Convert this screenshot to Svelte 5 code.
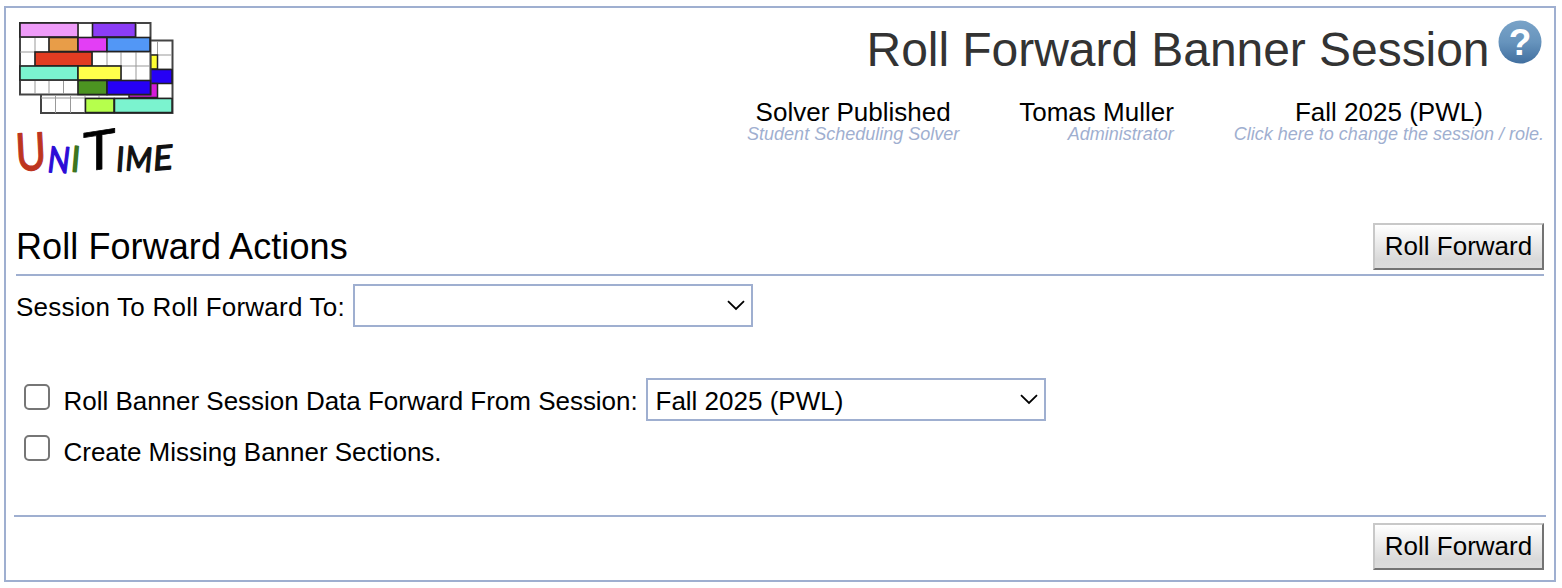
<script>
  let target = $state('');
  let source = $state('Fall 2025 (PWL)');
  let rollData = $state(false);
  let createSections = $state(false);

  const info = [
    { title: 'Solver Published', note: 'Student Scheduling Solver', kind: 'solver' },
    { title: 'Tomas Muller', note: 'Administrator', kind: 'user' },
    { title: 'Fall 2025 (PWL)', note: 'Click here to change the session / role.', kind: 'session' }
  ];

  // Timetable blocks of the logo: x, y, width, height, fill
  const back = [
    [150.5, 55, 7, 14, '#ffff33'],
    [150.5, 69.5, 21.5, 14, '#2600f5'],
    [129, 83.5, 28.5, 14, '#d51bd8'],
    [85.5, 98.5, 28.5, 14, '#b6ff4c'],
    [114.5, 98.5, 57.5, 14, '#7bf3cf']
  ];
  const front = [
    [20, 23, 58, 14, '#ee9bf8'],
    [92.5, 23, 43, 14, '#8b3df6'],
    [49, 37.5, 29, 14, '#e89d48'],
    [78, 37.5, 29, 14, '#e33ef5'],
    [107, 37.5, 43, 14, '#5297f6'],
    [35, 52, 57, 14, '#e23c22'],
    [20, 66, 58, 14, '#7bf3cf'],
    [78, 66, 43, 14, '#ffff4b'],
    [78, 80.5, 29, 14, '#4c9421'],
    [107, 80.5, 43.5, 14, '#2600f5']
  ];
  // Wordmark letters: glyph, x, baseline, size, x scale, colour, stroke, rotation, skew
  const letters = [
    ['U', 16.5, 171, 52, 0.8, '#bd351f', 1.2, -3, 0],
    ['N', 46.5, 172, 36, 0.8, '#2c0bd6', 1.4, 3, -4],
    ['I', 70.5, 171, 35, 0.85, '#3d751f', 1.8, 5, 0],
    ['T', 83, 172, 54, 1.02, '#000', 0.8, 0, 0, -9],
    ['I', 115.5, 171, 34, 0.85, '#151515', 1.6, 4, 0],
    ['M', 124.5, 170, 34, 0.86, '#111', 1.4, 5, 0],
    ['E', 152.5, 170.5, 34, 0.98, '#111', 1.4, 0, -4, -5]
  ];
</script>

{#snippet chevron()}
  <svg class="chevron" width="18" height="11" viewBox="0 0 18 11" aria-hidden="true">
    <path d="M1 1.2 L9 9 L17 1.2" fill="none" stroke="#000" stroke-width="1.8" />
  </svg>
{/snippet}

<main class="page">
  <header>
    <svg class="logo" width="160" height="180" viewBox="16 18 160 180" role="img" aria-label="UniTime">
      <rect x="41" y="40.5" width="131.5" height="72.5" fill="#fff" stroke="#444" stroke-width="2" />
      <path d="M157.5 41V98M55.5 96V113M70.5 96V113M85 96V113M99 96V99M150 55H172M150 69H172M41 98H172" stroke="#999" stroke-width="1" />
      {#each back as [x, y, w, h, fill]}
        <rect {x} {y} width={w} height={h} {fill} stroke="#222" stroke-width="1.5" />
      {/each}
      <rect x="20" y="23" width="130.5" height="71.5" fill="#fff" stroke="#444" stroke-width="2" />
      <path d="M35 37V94M49 37V94M63.5 80V94M78 23V94M92.5 23V94M107 52V80M121 52V80M136 23V80M20 37.5H150M20 52H150M20 66H150M20 80.5H150" stroke="#999" stroke-width="1" />
      {#each front as [x, y, w, h, fill]}
        <rect {x} {y} width={w} height={h} {fill} stroke="#222" stroke-width="1.6" />
      {/each}
      <g class="wordmark">
        {#each letters as [letter, x, y, size, stretch, color, weight, turn, skewX, skewY = 0]}
          <text
            font-size={size}
            fill={color}
            stroke={color}
            stroke-width={weight}
            transform={`translate(${x} ${y}) rotate(${turn}) skewX(${skewX}) skewY(${skewY}) scale(${stretch} 1)`}>{letter}</text>
        {/each}
      </g>
    </svg>
    <div class="heading">
      <div class="title">
        <h1>Roll Forward Banner Session</h1>
        <svg class="help" width="44" height="44" viewBox="0 0 44 44" role="img" aria-label="Help">
          <defs>
            <linearGradient id="help-fill" x1="0" y1="0" x2="0" y2="1">
              <stop offset="0" stop-color="#79a3c8" />
              <stop offset="0.5" stop-color="#6794bd" />
              <stop offset="1" stop-color="#416f9f" />
            </linearGradient>
          </defs>
          <circle cx="22" cy="22" r="21.5" fill="url(#help-fill)" />
          <text x="22" y="35" text-anchor="middle">?</text>
        </svg>
      </div>
      <div class="info">
        {#each info as item}
          <div class="item {item.kind}">
            <span>{item.title}</span>
            <em>{item.note}</em>
          </div>
        {/each}
      </div>
    </div>
  </header>

  <section class="section-title">
    <h2>Roll Forward Actions</h2>
    <button type="button">Roll Forward</button>
  </section>

  <div class="target row">
    <label for="target">Session To Roll Forward To:</label>
    <div class="select">
      <select id="target" bind:value={target}><option value=""></option></select>
      {@render chevron()}
    </div>
  </div>

  <div class="data row">
    <input id="roll" type="checkbox" bind:checked={rollData} />
    <label for="roll">Roll Banner Session Data Forward From Session:</label>
    <div class="select">
      <select bind:value={source} aria-label="Source session"><option>Fall 2025 (PWL)</option></select>
      {@render chevron()}
    </div>
  </div>
  <div class="create row">
    <input id="create" type="checkbox" bind:checked={createSections} />
    <label for="create">Create Missing Banner Sections.</label>
  </div>

  <footer>
    <button type="button">Roll Forward</button>
  </footer>
</main>

<style>
  :global(body) {
    background: #fff;
  }
  :global(#app) {
    display: flow-root;
  }
  .page {
    box-sizing: border-box;
    width: 1552px;
    height: 576px;
    margin: 6px 0 0 4px;
    border: 2px solid #9fafd0;
    font: 26px/30px "Liberation Sans", Arial, sans-serif;
    color: #000;
    display: flex;
    flex-direction: column;
  }
  header {
    display: flex;
    justify-content: space-between;
    height: 212px;
    padding: 10px 10px 0;
    box-sizing: border-box;
    flex: none;
  }
  .logo {
    display: block;
    flex: none;
    overflow: visible;
  }
  .wordmark {
    font-family: Lato, sans-serif;
    stroke-linejoin: round;
  }
  .heading {
    display: flex;
    flex-direction: column;
    align-items: flex-end;
  }
  .title {
    display: flex;
    gap: 8.5px;
    padding: 2px 2px 0 0;
  }
  h1 {
    margin: 0;
    padding-top: 2px;
    font-size: 48px;
    line-height: 56px;
    font-weight: 400;
    color: #333;
    letter-spacing: -0.05px;
    white-space: nowrap;
  }
  .help {
    overflow: visible;
  }
  .help text {
    font: 700 37px "Liberation Sans", Arial, sans-serif;
    fill: #fff;
  }
  .info {
    display: flex;
    gap: 60px;
    margin-top: 19px;
    white-space: nowrap;
  }
  .item {
    display: flex;
    flex-direction: column;
    align-items: center;
  }
  .item.user {
    align-items: flex-end;
  }
  .item em {
    font-size: 18px;
    line-height: 20px;
    margin-top: -3px;
    color: #9fafd0;
  }
  .section-title {
    display: flex;
    justify-content: space-between;
    align-items: flex-start;
    flex: none;
    box-sizing: border-box;
    height: 56px;
    margin: 0 10px;
    padding-top: 3px;
    border-bottom: 2px solid #9fafd0;
  }
  h2 {
    margin: 3px 0 0;
    font-size: 36px;
    line-height: 42px;
    font-weight: 400;
    letter-spacing: 0.08px;
  }
  button {
    box-sizing: border-box;
    width: 171px;
    height: 47px;
    padding: 0 0 2px;
    border: 2px solid;
    border-color: #c8c8c8 #737373 #737373 #c8c8c8;
    background: linear-gradient(#fff, #d9d9d9 80%, #dcdcdc);
    font: inherit;
    color: #000;
  }
  .row {
    display: flex;
    flex: none;
    align-items: flex-start;
    white-space: nowrap;
  }
  .row label {
    margin-top: 8px;
  }
  .target {
    height: 102px;
    padding: 8px 0 0 10px;
    box-sizing: border-box;
  }
  .target label {
    width: 337px;
    letter-spacing: 0.23px;
  }
  .data {
    height: 51px;
    padding-left: 18px;
  }
  .data label {
    width: 582.5px;
    letter-spacing: -0.02px;
  }
  .create {
    height: 78px;
    padding-left: 18px;
  }
  .create label {
    letter-spacing: -0.02px;
  }
  input {
    appearance: none;
    box-sizing: border-box;
    width: 26px;
    height: 26px;
    margin: 6px 13.5px 0 0;
    border: 2px solid #767676;
    border-radius: 5px;
    background: #fff;
  }
  .select {
    position: relative;
    width: 400px;
    height: 43px;
  }
  select {
    appearance: none;
    box-sizing: border-box;
    width: 400px;
    height: 43px;
    padding: 2px 40px 0 7.5px;
    border: 2px solid #9fafd0;
    border-radius: 0;
    background: #fff;
    font: inherit;
    color: #000;
    display: block;
  }
  .chevron {
    position: absolute;
    right: 8px;
    top: 16px;
    pointer-events: none;
  }
  footer {
    display: flex;
    justify-content: flex-end;
    flex: none;
    margin: 8px 8px 0;
    padding: 6px 2px 0;
    border-top: 2px solid #9fafd0;
  }
</style>
